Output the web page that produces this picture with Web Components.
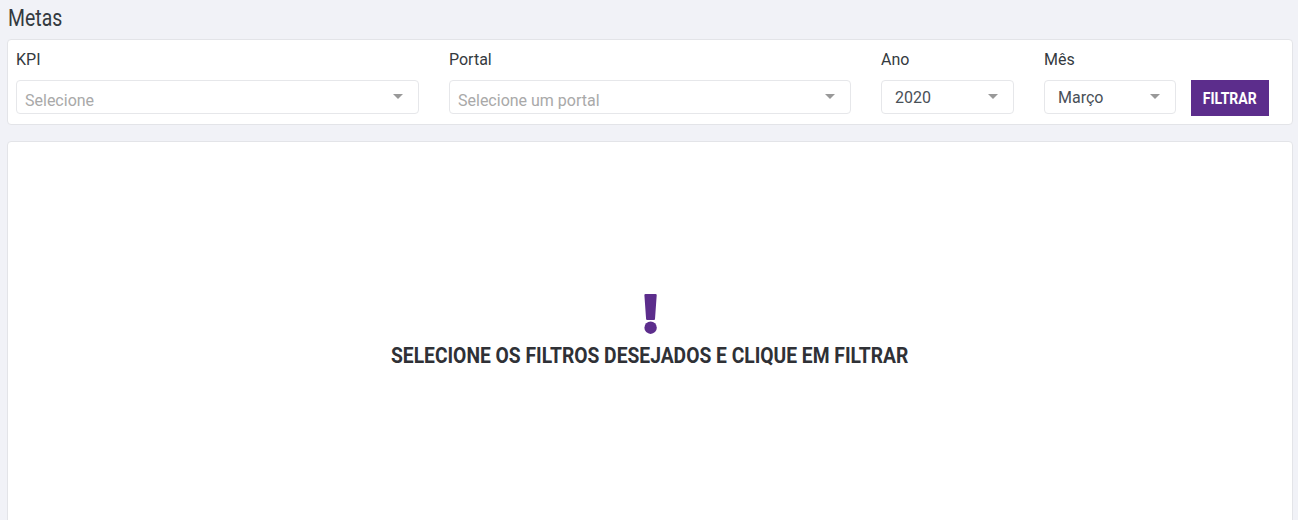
<!DOCTYPE html>
<html lang="pt">
<head>
<meta charset="utf-8">
<title>Metas</title>
<style>
  html, body { margin: 0; height: 100%; overflow: hidden; }
  body { background: #f1f2f7; font-family: Roboto, sans-serif; color: #343a40; }
</style>
</head>
<body>
<metas-page>
  <filter-card>
    <select-field label="KPI" placeholder="Selecione" style="--w:403px"></select-field>
    <select-field label="Portal" placeholder="Selecione um portal" style="--w:402px"></select-field>
    <select-field label="Ano" value="2020" style="--w:133px"></select-field>
    <select-field label="Mês" value="Março" style="--w:132px"></select-field>
    <filter-button>FILTRAR</filter-button>
  </filter-card>
  <empty-state>SELECIONE OS FILTROS DESEJADOS E CLIQUE EM FILTRAR</empty-state>
</metas-page>

<script>
class MetasPage extends HTMLElement {
  constructor() {
    super();
    this._shadowRoot = this.attachShadow({ mode: "open" });
    this._shadowRoot.innerHTML = `
      <style>
        :host { display: block; padding: 0 5px 0 7px; }
        h1 {
          margin: 0;
          height: 39px;
          padding-left: 1px;
          font: 400 24px/37px Roboto, sans-serif;
          color: #343a40;
        }
        /* no condensed face installed, so the heading font is narrowed by hand */
        span { display: inline-block; transform: scaleX(0.81); transform-origin: left center; }
      </style>
      <h1><span>Metas</span></h1>
      <slot></slot>
    `;
  }
}
customElements.define("metas-page", MetasPage);

class FilterCard extends HTMLElement {
  constructor() {
    super();
    this._shadowRoot = this.attachShadow({ mode: "open" });
    this._shadowRoot.innerHTML = `
      <style>
        :host {
          display: flex;
          align-items: flex-start;
          gap: 30px;
          box-sizing: border-box;
          height: 86px;
          padding: 9px 8px 0 8px;
          background: #fff;
          border: 1px solid #e3e4e8;
          border-radius: 4px;
        }
        ::slotted(filter-button) { margin: 31px 0 0 -15px; }
      </style>
      <slot></slot>
    `;
  }
}
customElements.define("filter-card", FilterCard);

class SelectField extends HTMLElement {
  constructor() {
    super();
    this._shadowRoot = this.attachShadow({ mode: "open" });
  }
  connectedCallback() {
    this.render();
  }
  render() {
    const value = this.getAttribute("value");
    const text = value || this.getAttribute("placeholder");
    this._shadowRoot.innerHTML = `
      <style>
        :host { display: block; width: var(--w); flex: none; }
        label { display: block; height: 31px; font-size: 16px; line-height: 21px; color: #343a40; }
        .box {
          display: flex;
          align-items: center;
          justify-content: space-between;
          box-sizing: border-box;
          height: 34px;
          background: #fff;
          border: 1px solid #e6e7ea;
          border-radius: 4px;
          font-size: 16px;
        }
        .placeholder { padding: 6px 0 0 8px; color: #a9a9a9; }
        .value { padding-left: 13px; color: #495057; }
        .arrow {
          width: 0; height: 0;
          margin-right: 15px;
          margin-bottom: 2px;
          border-left: 5px solid transparent;
          border-right: 5px solid transparent;
          border-top: 5px solid #999;
        }
      </style>
      <label>${this.getAttribute("label")}</label>
      <div class="box">
        <span class="${value ? "value" : "placeholder"}">${text}</span>
        <span class="arrow"></span>
      </div>
    `;
  }
}
customElements.define("select-field", SelectField);

class FilterButton extends HTMLElement {
  constructor() {
    super();
    this._shadowRoot = this.attachShadow({ mode: "open" });
    this._shadowRoot.innerHTML = `
      <style>
        :host {
          display: flex;
          align-items: center;
          justify-content: center;
          flex: none;
          width: 78px;
          height: 36px;
          background: #5c2d8c;
          color: #fff;
          font-size: 16px;
          font-weight: 700;
        }
        span { display: inline-block; transform: scaleX(0.875); }
      </style>
      <span><slot></slot></span>
    `;
  }
}
customElements.define("filter-button", FilterButton);

class EmptyState extends HTMLElement {
  constructor() {
    super();
    this._shadowRoot = this.attachShadow({ mode: "open" });
    this._shadowRoot.innerHTML = `
      <style>
        :host {
          display: flex;
          flex-direction: column;
          align-items: center;
          box-sizing: border-box;
          height: 500px;
          margin-top: 16px;
          padding-top: 152px;
          background: #fff;
          border: 1px solid #e3e4e8;
          border-radius: 4px;
        }
        svg { display: block; }
        p {
          margin: 8px 0 0;
          font: 700 22px/28px Roboto, sans-serif;
          color: #2f3136;
          white-space: nowrap;
          transform: scaleX(0.875);
        }
      </style>
      <svg width="14" height="40" viewBox="0 0 14 40" aria-hidden="true">
        <path fill="#5c2d8c" d="M2.6 0h9.9a1.2 1.2 0 0 1 1.2 1.3L12 25a1 1 0 0 1-1 1H4.1a1 1 0 0 1-1-1L1.4 1.3A1.2 1.2 0 0 1 2.6 0z"/>
        <circle fill="#5c2d8c" cx="7.6" cy="33.7" r="6.2"/>
      </svg>
      <p><slot></slot></p>
    `;
  }
}
customElements.define("empty-state", EmptyState);
</script>
</body>
</html>
